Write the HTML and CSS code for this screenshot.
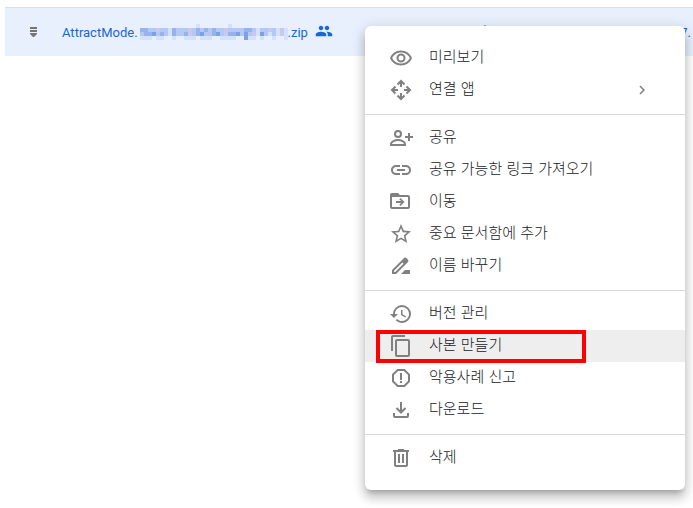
FILE: index.html
```html
<!DOCTYPE html>
<html lang="ko">
<head>
<meta charset="utf-8">
<title>AttractMode</title>
<link rel="stylesheet" href="styles.css">
</head>
<body>
<main class="file-list">
  <div class="file-row">
    <svg class="file-type" viewBox="0 0 8 10" aria-hidden="true"><path d="M0 0h7v2H0zM0 3h7v2H0zM0 6h7v1L4 10H3L0 7z"/></svg>
    <span class="file-name"><span>AttractMode.</span><svg class="redacted" viewBox="0 0 150 16" aria-hidden="true" shape-rendering="crispEdges">
      <path fill="#d3e1fb" d="M2 4h148v8H2zM58 0h4v4h-4zM90 0h4v4h-4zM2 12h12v4H2zM18 12h8v4h-8zM34 12h4v4h-4zM46 12h12v4H46zM62 12h12v4H62zM82 12h16v4H82zM110 12h8v4h-8zM122 12h4v4h-4zM134 12h4v4h-4zM146 12h4v4h-4z"/>
      <path fill="#b3c8f3" d="M2 4h28v8H2zM34 4h24v8H34zM62 4h24v8H62zM90 4h28v8H90zM122 4h8v8h-8zM134 4h4v8h-4z"/>
      <path fill="#98b3ec" d="M2 4h8v4H2zM6 8h12v4H6zM22 8h4v4h-4zM34 4h4v8h-4zM46 8h4v4h-4zM58 4h4v8h-4zM66 4h4v4h-4zM74 4h4v8h-4zM90 8h12v4H90zM106 4h8v4h-8z"/>
      <path fill="#7da1e5" d="M14 8h4v4h-4zM62 8h4v4h-4zM78 8h4v4h-4zM98 8h4v4h-4zM106 8h4v8h-4zM122 8h4v4h-4z"/>
      <path fill="#c8c9ef" d="M18 4h4v4h-4zM50 4h4v8h-4zM86 4h4v8h-4zM114 8h4v4h-4zM130 4h4v4h-4zM142 4h4v8h-4z"/>
    </svg><span>.zip</span></span>
    <svg class="shared" viewBox="0 0 24 24" role="img" aria-label="공유됨"><path d="M16 11c1.660 0 2.990-1.340 2.990-3S17.660 5 16 5s-3 1.340-3 3 1.340 3 3 3zm-8 0c1.660 0 2.990-1.340 2.990-3S9.660 5 8 5 5 6.340 5 8s1.340 3 3 3zm0 2c-2.330 0-7 1.170-7 3.500V19h14v-2.500C15 14.170 10.330 13 8 13zm8 0c-.29 0-.62.02-.97.05 1.160.84 1.970 1.970 1.970 3.450V19h6v-2.500c0-2.330-4.670-3.500-7-3.500z"/></svg>
    <span class="owner-mark"></span>
    <span class="date-end">7.</span>
  </div>
</main>

<div class="menu" role="menu">
  <button class="item" role="menuitem"><svg viewBox="0 0 24 24"><path d="M12 6.500c3.790 0 7.170 2.130 8.820 5.500-1.650 3.370-5.020 5.500-8.820 5.500S4.830 15.370 3.180 12C4.830 8.630 8.210 6.500 12 6.500m0-2C7 4.500 2.730 7.610 1 12c1.730 4.390 6 7.500 11 7.500s9.270-3.110 11-7.500c-1.730-4.390-6-7.500-11-7.500zm0 5a2.500 2.500 0 0 1 0 5 2.500 2.500 0 0 1 0-5m0-2a4.500 4.500 0 1 0 0 9 4.500 4.500 0 0 0 0-9z"/></svg><span>미리보기</span></button>
  <button class="item" role="menuitem"><svg viewBox="0 0 24 24"><path class="line" d="M12 9V4M8.500 6.500 12 3l3.500 3.500M12 15v5m-3.500-2.500L12 21l3.500-3.500M9 12H4m2.500-3.500L3 12l3.500 3.500M15 12h5m-2.500-3.500L21 12l-3.500 3.500"/></svg><span>연결 앱</span><svg class="chevron" viewBox="0 0 24 24"><path d="M8.590 16.590 13.170 12 8.590 7.410 10 6l6 6-6 6z"/></svg></button>
  <hr>
  <button class="item" role="menuitem"><svg viewBox="0 0 24 24"><path class="line" d="M2 19v-1c0-2.500 4-4 7-4s7 1.500 7 4v1zM20 7v8M16 11h8"/><circle class="line" cx="9" cy="8" r="3"/></svg><span>공유</span></button>
  <button class="item" role="menuitem"><svg viewBox="0 0 24 24"><path d="M3.900 12c0-1.710 1.390-3.100 3.100-3.100h4V7H7c-2.760 0-5 2.240-5 5s2.240 5 5 5h4v-1.900H7c-1.710 0-3.100-1.390-3.100-3.100zM8 13h8v-2H8v2zm9-6h-4v1.900h4c1.710 0 3.100 1.390 3.100 3.100s-1.390 3.100-3.100 3.100h-4V17h4c2.760 0 5-2.240 5-5s-2.240-5-5-5z"/></svg><span>공유 가능한 링크 가져오기</span></button>
  <button class="item" role="menuitem"><svg viewBox="0 0 24 24"><path d="M19 5h-8L9 3H3c-1.100 0-2 .9-2 2v12c0 1.100.9 2 2 2h16c1.100 0 2-.9 2-2V7c0-1.100-.9-2-2-2zm0 12H3V7h16zM11.500 16l-1.200-1.200 1.800-1.800H7v-2h5.100l-1.800-1.800L11.500 8l4 4z"/></svg><span>이동</span></button>
  <button class="item" role="menuitem"><svg viewBox="0 0 24 24"><path d="m22 9.240-7.190-.62L12 2 9.190 8.630 2 9.240l5.460 4.730L5.820 21 12 17.270 18.180 21l-1.630-7.030L22 9.240zM12 15.400l-3.760 2.270 1-4.280-3.320-2.880 4.380-.38L12 6.100l1.710 4.040 4.380.38-3.320 2.880 1 4.280L12 15.400z"/></svg><span>중요 문서함에 추가</span></button>
  <button class="item" role="menuitem"><svg viewBox="0 0 24 24"><path d="M17.700 4.200c-.8-.8-2.100-.8-2.900 0L3 16v4h4L18.800 8.200c.8-.8.8-2 0-2.800zM6.200 18H5v-1.200l8.300-8.300 1.200 1.200zM12 20l4-4h5v4z"/></svg><span>이름 바꾸기</span></button>
  <hr>
  <button class="item" role="menuitem"><svg viewBox="0 0 24 24"><path d="M13 3a9 9 0 0 0-9 9H1l3.890 3.890.07.14L9 12H6c0-3.870 3.130-7 7-7s7 3.130 7 7-3.130 7-7 7c-1.930 0-3.680-.79-4.940-2.060l-1.420 1.420A8.954 8.954 0 0 0 13 21a9 9 0 0 0 0-18zm-1 5v5l4.280 2.540.72-1.210-3.500-2.080V8z"/></svg><span>버전 관리</span></button>
  <button class="item selected" role="menuitem"><svg viewBox="0 0 24 24"><path d="M16 1H4c-1.100 0-2 .9-2 2v14h2V3h12V1zm3 4H8c-1.100 0-2 .9-2 2v14c0 1.100.9 2 2 2h11c1.100 0 2-.9 2-2V7c0-1.100-.9-2-2-2zm0 16H8V7h11v14z"/></svg><span>사본 만들기</span></button>
  <button class="item" role="menuitem"><svg viewBox="0 0 24 24"><path d="M15.730 3H8.270L3 8.270v7.460L8.270 21h7.460L21 15.730V8.270L15.730 3zM19 14.900 14.900 19H9.100L5 14.900V9.100L9.100 5h5.800L19 9.100v5.800zM11 7h2v7h-2zM11 15h2v2h-2z"/></svg><span>악용사례 신고</span></button>
  <button class="item" role="menuitem"><svg viewBox="0 0 24 24"><path class="line" d="M12 4v10M7.500 10l4.500 4.500 4.500-4.500M5 15v3q0 1 1 1h12q1 0 1-1v-3"/></svg><span>다운로드</span></button>
  <hr>
  <button class="item" role="menuitem"><svg viewBox="0 0 24 24"><path d="M15 4V3H9v1H4v2h1v13c0 1.100.9 2 2 2h10c1.100 0 2-.9 2-2V6h1V4h-5zm2 15H7V6h10v13zM9 8h2v9H9zM13 8h2v9h-2z"/></svg><span>삭제</span></button>
</div>
</body>
</html>
```
FILE: styles.css
```css
body {
  margin: 0;
  background: #fff;
  font-family: Roboto, "Noto Sans CJK KR", sans-serif;
}

.file-list {
  padding: 7px 0 0 5px;
}

.file-row {
  display: flex;
  align-items: center;
  box-sizing: border-box;
  height: 49px;
  padding: 0 2px 0 25px;
  border-top: 1px solid #dadce0;
  background: #e8f0fe;
  color: #1967d2;
  font-size: 13px;
  line-height: 20px;
}

.file-type {
  width: 8px;
  height: 10px;
  margin-right: 24px;
  fill: #757575;
}

.file-name {
  display: flex;
  align-items: center;
}

.file-name span,
.date-end {
  padding-top: 2px;
}

.redacted {
  width: 150px;
  height: 16px;
}

.shared {
  width: 18px;
  height: 18px;
  margin: 0 auto 2px 7px;
  fill: #1967d2;
}

/* Top edge of the owner text, the rest lies under the menu */
.owner-mark {
  align-self: flex-start;
  width: 2px;
  height: 1px;
  margin: 17px 194px 0 0;
  background: #7fa9e6;
}

/* Context menu floating over the list */
.menu {
  position: absolute;
  top: 26px;
  right: 8px;
  box-sizing: border-box;
  width: 320px;
  padding: 16px 0;
  border-radius: 6px;
  background: #fff;
  box-shadow: 0 8px 10px 1px rgba(0, 0, 0, .14), 0 3px 14px 2px rgba(0, 0, 0, .12), 0 5px 5px -3px rgba(0, 0, 0, .2);
}

.menu hr {
  height: 1px;
  margin: 8px 0 7px;
  border: 0;
  background: #dadada;
}

.item {
  position: relative;
  display: flex;
  align-items: center;
  box-sizing: border-box;
  width: 100%;
  height: 32px;
  padding: 0 32px 4px 24px;
  border: 0;
  background: transparent;
  color: #202124;
  font-family: "Noto Sans CJK KR", sans-serif;
  font-size: 15px;
  font-weight: 300;
  line-height: 20px;
  text-align: left;
}

.item svg {
  flex: none;
  width: 24px;
  height: 24px;
  margin: 4px 16px 0 0;
  fill: #808080;
}

.item .chevron {
  width: 18px;
  height: 18px;
  margin: 4px 2px 0 auto;
}

.item .line {
  fill: none;
  stroke: #808080;
  stroke-width: 2;
}

.selected {
  background: #eee;
}

/* Highlight frame drawn over the selected entry */
.selected::after {
  content: "";
  position: absolute;
  inset: 0 auto auto 11px;
  box-sizing: border-box;
  width: 210px;
  height: 33px;
  border: 4px solid #f00;
}
```
